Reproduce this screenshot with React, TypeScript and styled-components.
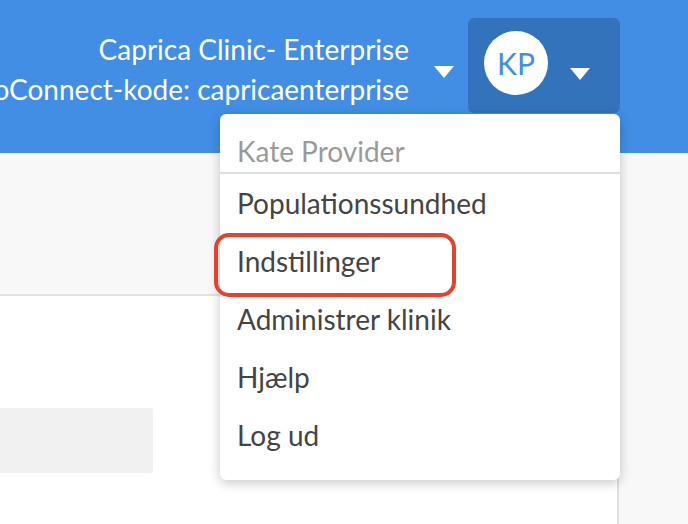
import React from 'react';
import styled, { createGlobalStyle } from 'styled-components';

const GlobalStyle = createGlobalStyle`
  html, body {
    margin: 0;
    padding: 0;
    overflow: hidden;
  }
  body {
    font-family: Lato, "Open Sans", sans-serif;
    background: #f8f8f8;
  }
`;

const menuItems = ['Populationssundhed', 'Indstillinger', 'Administrer klinik', 'Hjælp', 'Log ud'];

const App: React.FC = () => {
  return (
    <>
      <GlobalStyle />
      <Page>
        <Header>
          <ClinicInfo>
            <ClinicText>
              <span>Caprica Clinic- Enterprise</span>
              <span>DoConnect-kode: capricaenterprise</span>
            </ClinicText>
            <Caret $offset={6} />
          </ClinicInfo>

          <UserMenu>
            <UserButton>
              <Avatar>KP</Avatar>
              <Caret $offset={50} />
            </UserButton>

            <Dropdown>
              <DropdownHeader>Kate Provider</DropdownHeader>
              {menuItems.map((item) => (
                <MenuItem key={item} $marked={item === 'Indstillinger'}>
                  {item}
                </MenuItem>
              ))}
            </Dropdown>
          </UserMenu>
        </Header>

        <Body>
          <Main>
            <TopBand />
            <Content>
              <Placeholder />
            </Content>
          </Main>
          <Sidebar />
        </Body>
      </Page>
    </>
  );
};

export default App;


const Page = styled.div`
  width: 688px;
  height: 524px;
  display: flex;
  flex-direction: column;
  overflow: hidden;
`;

const Header = styled.header`
  position: relative;
  z-index: 2;
  height: 153px;
  flex-shrink: 0;
  box-sizing: border-box;
  padding: 18px 68px 0 0;
  background-color: #418ee4;
  display: flex;
  justify-content: flex-end;
  align-items: flex-start;
  gap: 14px;
`;

const ClinicInfo = styled.div`
  margin-top: 11px;
  display: flex;
  align-items: center;
  gap: 25px;
`;

const ClinicText = styled.div`
  display: flex;
  flex-direction: column;
  align-items: flex-end;
  color: #fff;
  font-size: 28px;
  line-height: 40px;
  white-space: nowrap;
`;

const Caret = styled.span<{ $offset: number }>`
  display: block;
  flex-shrink: 0;
  width: 0;
  height: 0;
  margin-top: ${(p) => p.$offset}px;
  border-left: 10px solid transparent;
  border-right: 10px solid transparent;
  border-top: 12px solid #fff;
`;

const UserMenu = styled.div`
  position: relative;
`;

const UserButton = styled.div`
  width: 152px;
  height: 95px;
  box-sizing: border-box;
  padding: 0 30px 0 16px;
  background-color: #3373bb;
  border-radius: 6px;
  display: flex;
  align-items: flex-start;
  gap: 22px;
  cursor: pointer;
`;

const Avatar = styled.div`
  width: 64px;
  height: 64px;
  margin-top: 13px;
  border-radius: 50%;
  background: #fff;
  color: #418ee4;
  font-size: 30px;
  display: flex;
  align-items: center;
  justify-content: center;
  flex-shrink: 0;
`;

const Dropdown = styled.div`
  position: absolute;
  top: calc(100% + 1px);
  right: 0;
  width: 400px;
  box-sizing: border-box;
  padding-bottom: 16px;
  background: #fff;
  border-radius: 6px;
  box-shadow: 0 3px 12px rgba(0, 0, 0, 0.22);
`;

const DropdownHeader = styled.div`
  padding: 16px 17px 0;
  line-height: 42px;
  font-size: 28px;
  color: #9a9a9a;
  border-bottom: 2px solid #dedede;
`;

const MenuItem = styled.div<{ $marked?: boolean }>`
  position: relative;
  padding: 0 17px;
  line-height: 58px;
  font-size: 28px;
  color: #444;
  cursor: pointer;

  ${(p) =>
    p.$marked &&
    `
    &::after {
      content: '';
      position: absolute;
      left: -6px;
      top: 1px;
      width: 242px;
      height: 64px;
      box-sizing: border-box;
      border: 4px solid #e8412a;
      border-radius: 15px;
    }
  `}
`;

const Body = styled.div`
  flex: 1;
  display: flex;
`;

const Main = styled.main`
  width: 619px;
  box-sizing: border-box;
  border-right: 2px solid #e0e0e0;
  background: #fff;
  display: flex;
  flex-direction: column;
`;

const TopBand = styled.div`
  height: 143px;
  box-sizing: border-box;
  background: #f8f8f8;
  border-bottom: 2px solid #e2e2e2;
`;

const Content = styled.div`
  padding-top: 112px;
`;

const Placeholder = styled.div`
  width: 153px;
  height: 65px;
  background: #f1f1f1;
  border-radius: 0 2px 2px 0;
`;

const Sidebar = styled.aside`
  flex: 1;
  background: #f8f8f8;
`;
